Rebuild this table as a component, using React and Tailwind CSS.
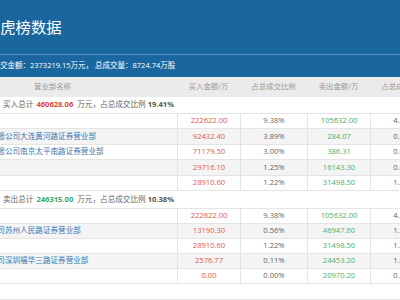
const FONT = { fontFamily: '"Open Sans", "Noto Sans CJK SC", sans-serif' };

const BUY_ROWS = [
  { name: '机构专用', buy: '222622.00', buyPct: '9.38%', sell: '105632.00', sellPct: '4.45%' },
  { name: '中国银河证券股份有限公司大连黄河路证券营业部', buy: '92432.40', buyPct: '3.89%', sell: '284.07', sellPct: '0.01%' },
  { name: '中国银河证券股份有限公司南京太平南路证券营业部', buy: '71179.50', buyPct: '3.00%', sell: '386.31', sellPct: '0.02%' },
  { name: '机构专用', buy: '29716.10', buyPct: '1.25%', sell: '16143.30', sellPct: '0.68%' },
  { name: '机构专用', buy: '28910.60', buyPct: '1.22%', sell: '31498.50', sellPct: '1.33%' },
];

const SELL_ROWS = [
  { name: '机构专用', buy: '222622.00', buyPct: '9.38%', sell: '105632.00', sellPct: '4.45%' },
  { name: '东吴证券股份有限公司苏州人民路证券营业部', buy: '13190.30', buyPct: '0.56%', sell: '46947.60', sellPct: '1.98%' },
  { name: '机构专用', buy: '28910.60', buyPct: '1.22%', sell: '31498.50', sellPct: '1.33%' },
  { name: '国信证券股份有限公司深圳福华三路证券营业部', buy: '2576.77', buyPct: '0.11%', sell: '24453.20', sellPct: '1.03%' },
  { name: '机构专用', buy: '0.00', buyPct: '0.00%', sell: '20970.20', sellPct: '0.88%' },
];

const Summary = ({ label, amount, pct, color, tall }) => (
  <div className={`flex items-center pl-[75px] text-[7.6px] text-[#666] whitespace-nowrap ${tall ? 'h-[16.5px]' : 'h-[15.5px]'}`}>
    <span>{label}</span>
    <span className={`ml-[3px] font-bold ${color}`}>{amount}</span>
    <span className="ml-[4px]">万元，占总成交比例</span>
    <span className="ml-[2px] font-bold text-[#555]">{pct}</span>
  </div>
);

const DataTable = ({ rows, rowH }) => (
  <div className="border-t border-[#e4e4e4]">
    {rows.map((r, i) => (
      <div
        key={i}
        className={`flex border-b border-[#e4e4e4] text-[7.6px] ${rowH} ${i % 2 === 1 ? 'bg-[#f4f4f4]' : 'bg-white'}`}
      >
        <div className="w-[249px] shrink-0 flex items-center pl-[1px] text-[#3a78b5] whitespace-nowrap overflow-hidden">
          {r.name}
        </div>
        <div className="w-[63px] shrink-0 flex items-center justify-center border-l border-[#e4e4e4] text-[#e4584b]">{r.buy}</div>
        <div className="w-[67px] shrink-0 flex items-center justify-center border-l border-[#e4e4e4] text-[#666]">{r.buyPct}</div>
        <div className="w-[63px] shrink-0 flex items-center justify-center border-l border-[#e4e4e4] text-[#4fae6c]">{r.sell}</div>
        <div className="w-[67px] shrink-0 flex items-center justify-center border-l border-[#e4e4e4] text-[#666]">{r.sellPct}</div>
      </div>
    ))}
  </div>
);

export default function App() {
  return (
    <div className="w-[400px] h-[300px] overflow-hidden bg-white" style={FONT}>
      <div className="bg-[#1a67a0] text-white">
        <div className="h-[54px] flex items-center">
          <h1 className="-ml-[15px] text-[15.3px] font-normal whitespace-nowrap">龙虎榜数据</h1>
        </div>
        <div className="h-px bg-[#5b93c2]" />
        <div className="h-[22px] flex items-center">
          <p className="-ml-[7.5px] text-[7.5px] whitespace-nowrap">
            成交金额：2373219.15万元， 总成交量：8724.74万股
          </p>
        </div>
      </div>

      <div className="-ml-[72px] w-[560px]">
        <div className="flex h-[20px] items-center bg-[#ebebeb] text-[7.4px] text-[#999]">
          <div className="w-[249px] shrink-0 text-center">营业部名称</div>
          <div className="w-[63px] shrink-0 text-center">买入金额/万</div>
          <div className="w-[67px] shrink-0 text-center">占总成交比例</div>
          <div className="w-[63px] shrink-0 text-center">卖出金额/万</div>
          <div className="w-[67px] shrink-0 text-center">占总成交比例</div>
        </div>

        <Summary label="买入总计" amount="460628.06" pct="19.41%" color="text-[#e5443a]" />
        <DataTable rows={BUY_ROWS} rowH="h-[15.5px]" />

        <Summary label="卖出总计" amount="246315.00" pct="10.38%" color="text-[#3aa864]" tall />
        <DataTable rows={SELL_ROWS} rowH="h-[15px]" />

        <div className="mt-[15.5px] border-t border-[#e4e4e4]" />
      </div>
    </div>
  );
}
